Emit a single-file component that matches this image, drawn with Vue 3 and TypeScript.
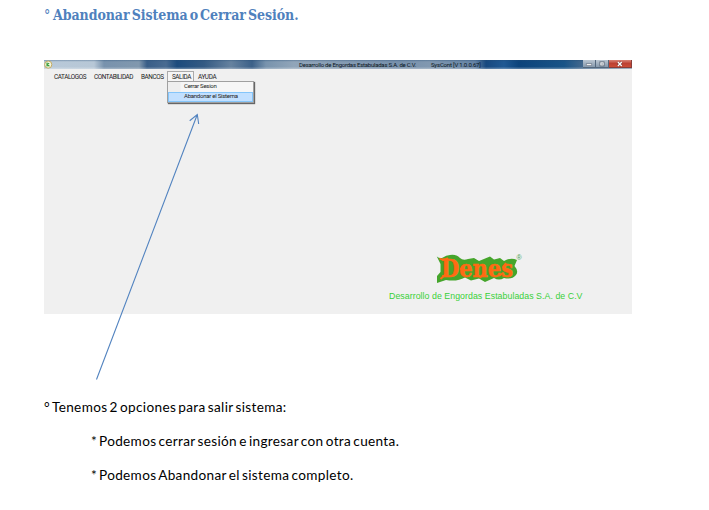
<script setup lang="ts">
import { ref } from 'vue'

interface MenuItem {
  label: string
  key: string
}

const menus: MenuItem[] = [
  { label: 'CATALOGOS', key: 'catalogos' },
  { label: 'CONTABILIDAD', key: 'contabilidad' },
  { label: 'BANCOS', key: 'bancos' },
  { label: 'SALIDA', key: 'salida' },
  { label: 'AYUDA', key: 'ayuda' },
]
const openMenu = ref('salida')
const exitOptions: MenuItem[] = [
  { label: 'Cerrar Sesion', key: 'cerrar' },
  { label: 'Abandonar el Sistema', key: 'abandonar' },
]
const highlighted = ref('abandonar')
</script>

<template>
  <main class="page">
    <h1 class="heading"><span class="deg">°</span><span class="title">Abandonar Sistema o Cerrar Sesión.</span></h1>

    <section class="window">
      <header class="titlebar">
        <svg class="app-icon" viewBox="0 0 9 9">
          <circle cx="4.2" cy="4.6" r="3.6" fill="#f4f6df" stroke="#c4ab63" stroke-width="1" />
          <path d="M3 2.6v4M3.2 4.6l2-1.5M3.2 4.5l2.2 1.7" stroke="#319b36" stroke-width="1.1" fill="none" />
        </svg>
        <span class="caption company">Desarrollo de Engordas Estabuladas S.A. de C.V.</span>
        <span class="caption version">SysCont [V 1.0.0.67]</span>
        <div class="controls">
          <span class="control"><svg viewBox="0 0 13 8"><rect x="3.5" y="3.8" width="6" height="2" fill="#fff" stroke="#566273" stroke-width=".6" /></svg></span>
          <span class="control"><svg viewBox="0 0 13 8"><rect x="4.2" y="1.7" width="4.6" height="4.4" fill="#f2f5f8" stroke="#566273" stroke-width=".9" /><rect x="6" y="3.4" width="1.2" height="1.2" fill="#566273" /></svg></span>
          <span class="control close"><svg viewBox="0 0 23 8"><path d="M9.3 2l4 4m0-4l-4 4" stroke="#763b3b" stroke-width="2.4" /><path d="M9.3 2l4 4m0-4l-4 4" stroke="#fff" stroke-width="1.4" /></svg></span>
        </div>
      </header>

      <nav class="menubar">
        <div v-for="menu in menus" :key="menu.key" class="menu" :class="[menu.key, { open: openMenu === menu.key }]">
          <span class="menu-label" @click="openMenu = menu.key">{{ menu.label }}</span>
          <ul v-if="menu.key === 'salida' && openMenu === 'salida'" class="dropdown">
            <li v-for="option in exitOptions" :key="option.key" :class="[option.key, { active: highlighted === option.key }]" @mouseenter="highlighted = option.key"><span>{{ option.label }}</span></li>
          </ul>
        </div>
      </nav>

      <div class="brand">
        <svg class="logo" viewBox="0 0 90 34">
          <path d="M.8 4.5Q4 7 7 5.5Q10 3 14 3Q20 2 24 6Q27 9 32 7L38 6 43 9 54 4.5 58 7.5 64 6 68 9Q75 5 81 8L78.5 14Q83 19 80 23Q76 28 68 26Q63 29 58 26L49 30 43 26.5 35 28.5 29 25.5Q21 30 10 28L1 31V24L4.5 20V12Z" fill="#45a52b" />
          <text x="5" y="24.8" class="logo-text" textLength="72" lengthAdjust="spacingAndGlyphs">Denes</text>
          <path d="M3.5 6.5Q8 9 12 6M4.5 27L10 22M27 14l-2 3 3 2M44 26l4-5M63 24l4-3M70 11l-3 5" fill="none" stroke="#ff6a13" stroke-width="2" />
          <text x="80.5" y="8.3" class="registered">®</text>
        </svg>
        <p class="brand-name">Desarrollo de Engordas Estabuladas S.A. de C.V</p>
      </div>
    </section>

    <section class="notes">
      <p class="intro"><span class="note-deg">°</span><span class="intro-text">Tenemos 2 opciones para salir sistema:</span></p>
      <p class="note first"><span class="star">*</span><span>Podemos cerrar sesión e ingresar con otra cuenta.</span></p>
      <p class="note second"><span class="star">*</span><span>Podemos Abandonar el sistema completo.</span></p>
    </section>

    <svg class="arrow" viewBox="0 0 112 272">
      <path d="M6.5 269.5L107.3 4.5M99.7 10.7L107.3 4.5L108.7 14" fill="none" stroke="#5384c0" stroke-width="1.1" />
    </svg>
  </main>
</template>

<style>
body { background: #fff; }
</style>

<style scoped>
.page { position: relative; width: 709px; height: 510px; overflow: hidden; background: #fff; color: #000; }
h1, p, ul { margin: 0; padding: 0; }
.heading { display: flex; height: 60px; padding-left: 44px; box-sizing: border-box; padding-top: 6px; font: bold 14px/18px "DejaVu Serif Condensed", "DejaVu Serif", serif; font-stretch: condensed; color: #4f81bd; white-space: nowrap; }
.deg { width: 9px; font-weight: normal; }
.title { letter-spacing: -.06px; word-spacing: -2.2px; }
.window { display: flex; flex-direction: column; width: 588px; height: 254px; margin-left: 44px; background: #f0f0f0; }
.titlebar { display: flex; height: 9px; flex: none; background: linear-gradient(180deg, #244b7466 0, transparent 20%, transparent 75%, #ffffff55 100%), linear-gradient(90deg, #b8c9d9 0, #b7c7d6 50px, #7892ad 60px, #8198ae 95px, #385d87 103px, #496b91 122px, #1c4b7d 133px, #345a83 160px, #66829f 187px, #3b6088 208px, #7893ad 222px, #91a5b9 250px, #7790ab 355px, #8198b0 385px, #6583a4 431px, #17487f 442px, #205993 460px, #0b437b 475px, #195487 520px, #44688d 539px, #8195aa 588px); }
.app-icon { width: 9px; height: 9px; }
.caption { font: 6px/10px Roboto, sans-serif; color: #0b1520; white-space: nowrap; }
.company { margin-left: 246px; width: 132px; letter-spacing: -.24px; }
.version { width: 152px; letter-spacing: -.2px; }
.controls { display: flex; height: 8px; }
.control { width: 13px; box-sizing: border-box; border: solid #53677d; border-width: 0 1px 1px 0; background: linear-gradient(#bac6d2, #8699ad); }
.control svg { display: block; width: 100%; height: 8px; }
.close { width: 23px; background: linear-gradient(#d88478, #bd4133 50%, #cc4c37); border-color: #883d39; }
.menubar { display: flex; height: 14px; padding-top: 2px; box-sizing: border-box; flex: none; font: 6.4px/9px Roboto, sans-serif; letter-spacing: -.42px; color: #222; white-space: nowrap; }
.menu { position: relative; height: 12px; }
.menu-label { display: block; padding-top: 2px; }
.catalogos { margin-left: 10px; width: 40px; }
.contabilidad { width: 47px; }
.bancos { width: 26px; }
.salida { width: 27px; }
.ayuda { padding-left: 4px; letter-spacing: -.3px; }
.open { box-sizing: border-box; border: 1px solid #aaa; border-bottom: 0; background: #f5f5f5; }
.open .menu-label { padding: 1px 0 0 4px; }
.dropdown { position: absolute; z-index: 2; left: -1px; top: 9px; width: 87px; height: 22px; box-sizing: border-box; border: 1px solid #a0a0a0; background: linear-gradient(90deg, #eee 0 12px, #f6f6f6 13px); box-shadow: 1px 1px 1px #666; list-style: none; font-size: 6px; letter-spacing: -.25px; }
.dropdown li { height: 10px; box-sizing: border-box; padding-left: 16px; line-height: 8px; }
.dropdown .active { height: 10px; border: 1px solid #84c5fa; padding-left: 15px; line-height: 6px; background: #c2e0ff; }
.brand { display: flex; flex-direction: column; margin-top: 169px; margin-left: 345px; }
.logo { width: 90px; height: 34px; margin-left: 47px; overflow: visible; }
.logo-text { font: bold 25px "DejaVu Serif Condensed", "DejaVu Serif", serif; fill: #ff6a13; stroke: #ff6a13; stroke-width: .5px; }
.registered { font: 7px "Liberation Sans", sans-serif; fill: #45a052; }
.brand-name { margin-top: 4px; font: 8.8px/12px "Liberation Sans", sans-serif; letter-spacing: .04px; color: #39d139; white-space: nowrap; }
.notes { padding-top: 83px; padding-left: 44px; font: 13.6px/20px Lato, sans-serif; letter-spacing: .33px; word-spacing: -1.6px; white-space: nowrap; }
.intro { display: flex; height: 34px; }
.note-deg { width: 8px; }
.note { display: flex; height: 34px; padding-left: 47px; }
.star { width: 8px; }
.arrow { position: absolute; left: 90px; top: 110px; width: 112px; height: 272px; z-index: 3; }
</style>
